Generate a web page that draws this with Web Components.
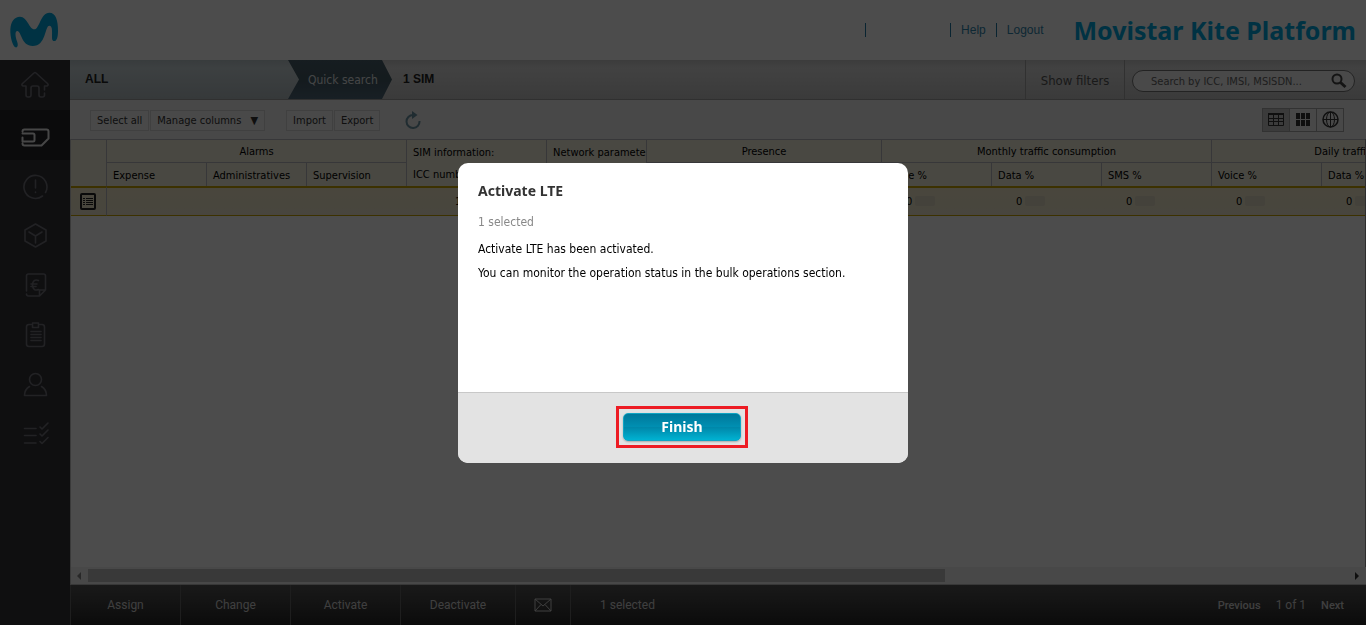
<!DOCTYPE html>
<html lang="en">
<head>
<meta charset="utf-8">
<title>Movistar Kite Platform</title>
<style>
  html, body { margin: 0; height: 100%; }
  body { font: 12px/16px "DejaVu Sans Condensed", "Noto Sans", sans-serif; color: #000; overflow: hidden; }
</style>
</head>
<body>
<kite-app></kite-app>
<script>
const define = (name, html) => {
  const template = document.createElement('template');
  template.innerHTML = html;
  customElements.define(name, class extends HTMLElement {
    constructor() {
      super();
      this.attachShadow({ mode: 'open' }).append(template.content.cloneNode(true));
    }
  });
};

define('kite-header', `
<style>
  :host { display: flex; align-items: center; height: 60px; padding: 0 10px; background: #fff; box-sizing: border-box; }
  .logo { width: 48px; height: 36px; display: block; }
  nav { display: flex; align-items: center; margin-left: auto; font: 12px/14px "Liberation Sans", sans-serif; }
  nav a { color: #2f86ad; text-decoration: none; padding: 0 10px; border-left: 1px solid #1f7ba3; }
  .user { width: 84px; height: 14px; border-left: 1px solid #1f7ba3; }
  h1 { margin: 0 0 0 20px; font: bold 25px/36px "Noto Sans", sans-serif; color: #00a9e0; white-space: nowrap; }
</style>
<svg class="logo" viewBox="30 36 144 108" role="img" aria-label="Movistar">
  <path fill="#00a9e0" d="M46 142C38 138 30 112 31 88C32 65 43 50 60 50C82 50 88 88 103 88C118 88 122 38 148 38C168 38 174 62 174 92C174 112 170 123 163 123C153 123 157 110 156 92C156 82 153 77 148 77C134 77 139 138 98 138C64 138 64 93 52 93C44 93 46 110 51 124C55 135 54 144 46 142Z"/>
</svg>
<nav aria-label="Account"><span class="user"></span><a href="#">Help</a><a href="#">Logout</a></nav>
<h1>Movistar Kite Platform</h1>
`);

define('kite-sidebar', `
<style>
  :host { display: block; width: 70px; background: #323238; box-sizing: border-box; }
  nav { display: grid; }
  a { display: grid; place-items: center; height: 50px; color: #72727a; }
  a.on { background: #25252a; color: #eee; }
  svg { width: 30px; height: 30px; fill: none; stroke: currentColor; stroke-width: 1.600; stroke-linecap: round; stroke-linejoin: round; }
</style>
<nav aria-label="Main">
  <a href="#" aria-label="Home"><svg viewBox="0 0 30 30"><path d="M24.500 23v2q0 2-2 2h-1.500q-2 0-2-2v-7q0-2-2-2h-4q-2 0-2 2v7q0 2-2 2H8q-2 0-2-2v-9H3q-2-1-.5-2.500L14 3q1-1 2 0l11.500 10.500Q29 15 27 16h-2.500v4"/></svg></a>
  <a href="#" class="on" aria-label="SIM"><svg viewBox="0 0 30 30"><path stroke-width="2" d="M2.500 23.500q0 2 2 2h17l7-7v-7q0-2-2-2h-22q-2 0-2 2M2.500 13.500h10.500q1.500 0 1.500 1.500v5q0 1.500-1.500 1.500H2.500v-4"/></svg></a>
  <a href="#" aria-label="Alerts"><svg viewBox="0 0 30 30"><path d="M22.500 26A11.500 11.500 0 1 1 25.500 22.500M15.500 10v8M15.500 22v.5"/></svg></a>
  <a href="#" aria-label="Products"><svg viewBox="0 0 30 30"><path d="M15.500 4l10.500 6v11l-10.500 6L5 21V10zM9 12l6.500 4 6.500-4M15.500 16v7"/></svg></a>
  <a href="#" aria-label="Billing"><svg viewBox="0 0 30 30"><path d="M6.500 21V6q0-2 2-2h15q2 0 2 2v14l-6 6h-11q-2 0-2-2M19.500 26v-6h6M18.500 10.500C15 9 12.500 11 12.500 15s2.500 6 6 4.500M11 14h6M11 16.500h5"/></svg></a>
  <a href="#" aria-label="Reports"><svg viewBox="0 0 30 30"><path d="M11 4.500H9q-2.500 0-2.500 2.500v17q0 2.500 2.500 2.500h13q2.500 0 2.500-2.500V7q0-2.500-2.500-2.500h-2M12.500 3h6v4.500h-6zM11 11.500h10M11 14.500h10M11 17.500h10M11 20.500h10"/></svg></a>
  <a href="#" aria-label="Users"><svg viewBox="0 0 30 30"><circle cx="15.500" cy="9.500" r="6"/><path d="M9.500 16.500q-5 3-5 9h22q0-6-5-9"/></svg></a>
  <a href="#" aria-label="Operations"><svg viewBox="0 0 30 30"><path d="M4.500 8.500H16M4.500 15.500H16M4.500 23H16M20 7l2 2 6-6M20 14l2 2 6-6M20 21.500l2 2 6-6"/></svg></a>
</nav>
`);

define('kite-breadcrumb', `
<style>
  :host { display: flex; height: 40px; box-sizing: border-box; border-bottom: 1px solid #a0a0a0; background: linear-gradient(#c8c8c8, #dcdcdc 8px, #c4c4c4); }
  .trail { display: flex; flex: 1; font: bold 12px/39px "Liberation Sans", sans-serif; color: #222; }
  .all { width: 229px; box-sizing: border-box; margin-right: -11px; padding-left: 15px; background: linear-gradient(#bcc8cc, #cbd6da 8px, #b4bfc3); }
  .chip { width: 104px; padding-left: 20px; box-sizing: border-box; font: 12px/41px "DejaVu Sans Condensed", "Noto Sans", sans-serif; color: #e4e8ea; background: linear-gradient(#4a616c, #445a65 50%, #50697a); clip-path: polygon(0 0, 94px 0, 100% 50%, 94px 100%, 0 100%, 11px 50%); }
  .count { padding-left: 11px; }
  .filters { width: 100px; box-sizing: border-box; border: 0; border-left: 1px solid #a6a6a6; border-right: 1px solid #a6a6a6; background: none; padding: 2px 0 0; font: 13px/16px "DejaVu Sans Condensed", "Noto Sans", sans-serif; color: #555; }
  form { display: flex; align-items: center; margin: 10px 11px 7px 7px; width: 223px; height: 22px; box-sizing: border-box; border: 1px solid #777; border-radius: 11px; background: #f4f4f4; padding: 0 7px 0 18px; }
  input { flex: 1; min-width: 0; border: 0; padding: 2px 0 0; outline: 0; background: none; font: 11px/18px "DejaVu Sans Condensed", "Noto Sans", sans-serif; color: #555; }
  input::placeholder { color: #666; opacity: 1; }
  form button { border: 0; background: none; padding: 0; width: 16px; height: 16px; color: #444; }
  svg { display: block; width: 16px; height: 16px; }
</style>
<div class="trail"><span class="all">ALL</span><span class="chip">Quick search</span><span class="count">1 SIM</span></div>
<button class="filters" type="button">Show filters</button>
<form role="search"><input type="text" aria-label="Search" placeholder="Search by ICC, IMSI, MSISDN..."><button type="button" aria-label="Search"><svg viewBox="0 0 16 16" fill="none" stroke="currentColor"><circle cx="6" cy="6" r="4.500" stroke-width="2"/><path d="M9.500 9.500L14.500 14" stroke-width="3"/></svg></button></form>
`);

define('kite-toolbar', `
<style>
  :host { display: flex; align-items: center; height: 39px; padding: 0 22px 0 20px; background: #f0f0f0; }
  .b { height: 21px; box-sizing: border-box; border: 1px solid #d6d6d6; background: #f3f3f3; padding: 0 6px; margin-right: 1px; font: 11px/19px "DejaVu Sans Condensed", "Noto Sans", sans-serif; color: #333; white-space: nowrap; }
  .group { display: flex; margin-right: 20px; padding-top: 2px; }
  .b i { font-style: normal; margin-left: 6px; }
  .refresh { border: 0; background: none; padding: 0; margin-left: 4px; color: #6b93a3; }
  svg { display: block; }
  .views { margin-left: auto; display: flex; border: 1px solid #a8a8a8; padding: 0; }
  .views button { width: 27px; height: 22px; box-sizing: border-box; border: 0; border-left: 1px solid #a8a8a8; padding: 0; background: #f0f0f0; color: #333; display: grid; place-items: center; }
  .views button:first-child { background: #c6c6c6; border-left: 0; width: 26px; }
</style>
<div class="group"><button class="b" type="button">Select all</button><button class="b" type="button">Manage columns <i>▼</i></button></div>
<div class="group"><button class="b" type="button">Import</button><button class="b" type="button">Export</button></div>
<button class="refresh" type="button" aria-label="Refresh"><svg width="16" height="18" viewBox="0 0 16 18"><path d="M8 4A6.500 6.500 0 1 0 14.500 10" fill="none" stroke="currentColor" stroke-width="2"/><path d="M7 0l5.500 4L7 8z" fill="currentColor"/></svg></button>
<div class="views">
  <button type="button" aria-label="Table view"><svg width="16" height="14" viewBox="0 0 16 14"><path d="M0 0h16v2H0z" fill="currentColor"/><path d="M.5.500h15v12H.500zM0 5.500h16M0 8.500h16M5.500 1v12M10.500 1v12" fill="none" stroke="currentColor"/></svg></button>
  <button type="button" aria-label="Grid view"><svg width="14" height="13" viewBox="0 0 14 13" fill="currentColor"><path d="M0 0h4v6H0zM5 0h4v6H5zM10 0h4v6h-4zM0 7h4v6H0zM5 7h4v6H5zM10 7h4v6h-4z"/></svg></button>
  <button type="button" aria-label="Map view"><svg width="17" height="17" viewBox="0 0 17 17" fill="none" stroke="currentColor"><circle cx="8.500" cy="8.500" r="7.500" stroke-width="1.500"/><ellipse cx="8.500" cy="8.500" rx="4" ry="7.500"/><path d="M1 8.500h15M8.500 1v15"/></svg></button>
</div>
`);

define('kite-table', `
<style>
  :host { display: block; overflow: hidden; border-left: 1px solid #c4c4c4; border-right: 1px solid #999; }
  table { width: 1471px; table-layout: fixed; border-collapse: separate; border-spacing: 0; font-size: 11px; line-height: 14px; }
  th, td { box-sizing: border-box; padding: 0 6px; font-weight: normal; text-align: left; overflow: hidden; white-space: nowrap; border-right: 1px solid #b8bac0; }
  th { background: #f4f0de; border-top: 1px solid #b8bac0; height: 23px; padding-top: 2px; }
  thead tr:last-child th { height: 24px; padding-top: 2px; }
  .c { text-align: center; }
  th.two { line-height: 22px; padding: 2px 0 0 6px; }
  td { height: 30px; background: linear-gradient(#f4ecca, #f0e8d0); border-top: 2px solid #c9a400; border-bottom: 1px solid #c9a400; border-right: 0; padding: 0 0 0 24px; }
  td:first-child { border-right: 1px solid #b8bac0; padding: 0 0 0 9px; }
  td.icc { padding-left: 48px; }
  td span { display: inline-block; width: 20px; height: 10px; border-radius: 2px; background: #e4dcc6; vertical-align: -1px; }
  svg { display: block; }
</style>
<table>
  <colgroup><col style="width:36px"><col style="width:100px"><col style="width:100px"><col style="width:100px"><col style="width:140px"><col style="width:100px"><col style="width:235px"><col style="width:110px"><col style="width:110px"><col style="width:110px"><col style="width:110px"><col style="width:110px"><col style="width:110px"></colgroup>
  <thead>
    <tr><th rowspan="2" aria-label="Details"></th><th colspan="3" class="c">Alarms</th><th rowspan="2" class="two">SIM information:<br>ICC number</th><th rowspan="2" class="two">Network parameters:<br>IP</th><th class="c">Presence</th><th colspan="3" class="c">Monthly traffic consumption</th><th colspan="3" class="c">Daily traffic consumption</th></tr>
    <tr><th>Expense</th><th>Administratives</th><th>Supervision</th><th></th><th>Voice %</th><th>Data %</th><th>SMS %</th><th>Voice %</th><th>Data %</th><th>SMS %</th></tr>
  </thead>
  <tbody>
    <tr><td><svg width="16" height="17" viewBox="0 0 16 17" fill="none" stroke="#222"><rect x="1" y="1" width="14" height="15" rx="1" stroke-width="2"/><path d="M3 5.500h2M3 7.500h2M3 9.500h2M3 11.500h2M6 5.500h7M6 7.500h7M6 9.500h7M6 11.500h7"/></svg></td><td></td><td></td><td></td><td class="icc">1</td><td></td><td></td><td>0 <span></span></td><td>0 <span></span></td><td>0 <span></span></td><td>0 <span></span></td><td>0 <span></span></td><td>0 <span></span></td></tr>
  </tbody>
</table>
`);

define('kite-scrollbar', `
<style>
  :host { display: flex; align-items: center; height: 17px; background: #f1f1f1; padding: 0 7px 0 6px; border-bottom: 1px solid #bbb; border-left: 1px solid #c4c4c4; }
  .track { flex: 1; margin: 0 7px; }
  .thumb { width: 68%; height: 13px; background: #bfbfbf; }
  svg { display: block; width: 4px; height: 8px; }
</style>
<svg viewBox="0 0 4 8"><path d="M4 0v8L0 4z" fill="#888"/></svg><div class="track"><div class="thumb"></div></div><svg viewBox="0 0 4 8"><path d="M0 0v8l4-4z" fill="#333"/></svg>
`);

define('kite-actionbar', `
<style>
  :host { display: flex; height: 40px; border-left: 1px solid #666; background: linear-gradient(#555, #444 40%, #262626); font: 12px/41px Roboto, sans-serif; color: #d4d4d4; }
  button { box-sizing: border-box; width: 110px; border: 0; border-right: 1px solid #666; padding: 0; background: none; font: inherit; color: inherit; }
  .wide { width: 115px; }
  .mail { width: 55px; display: grid; place-items: center; }
  .sel { padding-left: 29px; }
  .pager { display: flex; gap: 15px; margin-left: auto; padding-right: 22px; }
  .pager a { color: inherit; text-decoration: none; font-size: 11px; font-weight: 500; }
  svg { display: block; }
</style>
<button type="button">Assign</button><button type="button">Change</button><button type="button">Activate</button><button type="button" class="wide">Deactivate</button><button type="button" class="mail" aria-label="Send message"><svg width="18" height="14" viewBox="0 0 18 14" fill="none" stroke="currentColor"><path d="M1 1h16v12H1zM1 1l8 7 8-7M1 13l6-6.500M17 13l-6-6.500"/></svg></button><span class="sel">1 selected</span>
<div class="pager"><a href="#">Previous</a><span>1 of 1</span><a href="#">Next</a></div>
`);

define('kite-dialog', `
<style>
  :host { position: fixed; inset: 0; display: grid; place-items: center; background: rgba(0, 0, 0, .7); }
  section { width: 450px; max-width: 90vw; border-radius: 10px; overflow: hidden; background: #fff; }
  .body { min-height: 229px; padding: 20px; box-sizing: border-box; }
  footer { display: grid; place-items: center; box-sizing: border-box; height: 71px; padding: 0 2px 2px 0; border-top: 1px solid #c8c8c8; background: #e3e3e3; }
</style>
<section role="dialog" aria-modal="true" aria-label="Activate LTE">
  <div class="body"><slot></slot></div>
  <footer><slot name="actions"></slot></footer>
</section>
`);

define('kite-button', `
<style>
  :host { display: block; padding: 4px; border: 3px solid #ed1c24; }
  button { display: block; width: 118px; height: 28px; padding: 0; border: 1px solid #10a5c4; border-radius: 5px; font: bold 14px/24px "Noto Sans", sans-serif; color: #fff; background: linear-gradient(#00789a, #008fb2 49%, #0086a8 50%, #00b2d2); box-shadow: 0 1px 2px rgba(0, 0, 0, .25); }
</style>
<button type="button"><slot></slot></button>
`);

define('kite-app', `
<style>
  :host { display: grid; grid-template: 60px 1fr / 70px 1fr; height: 100vh; background: #fff; }
  kite-header { grid-column: 1 / -1; }
  main { display: flex; flex-direction: column; min-width: 0; }
  kite-table { flex: 1; }
  h2 { margin: 0 0 15px; font: bold 14px/16px "Noto Sans", sans-serif; color: #333; }
  p { margin: 0 0 8px; }
  .sub { margin-bottom: 11px; color: #888; }
</style>
<kite-header></kite-header>
<kite-sidebar></kite-sidebar>
<main>
  <kite-breadcrumb></kite-breadcrumb>
  <kite-toolbar></kite-toolbar>
  <kite-table></kite-table>
  <kite-scrollbar></kite-scrollbar>
  <kite-actionbar></kite-actionbar>
</main>
<kite-dialog>
  <h2>Activate LTE</h2>
  <p class="sub">1 selected</p>
  <p>Activate LTE has been activated.</p>
  <p>You can monitor the operation status in the bulk operations section.</p>
  <kite-button slot="actions">Finish</kite-button>
</kite-dialog>
`);
</script>
</body>
</html>
